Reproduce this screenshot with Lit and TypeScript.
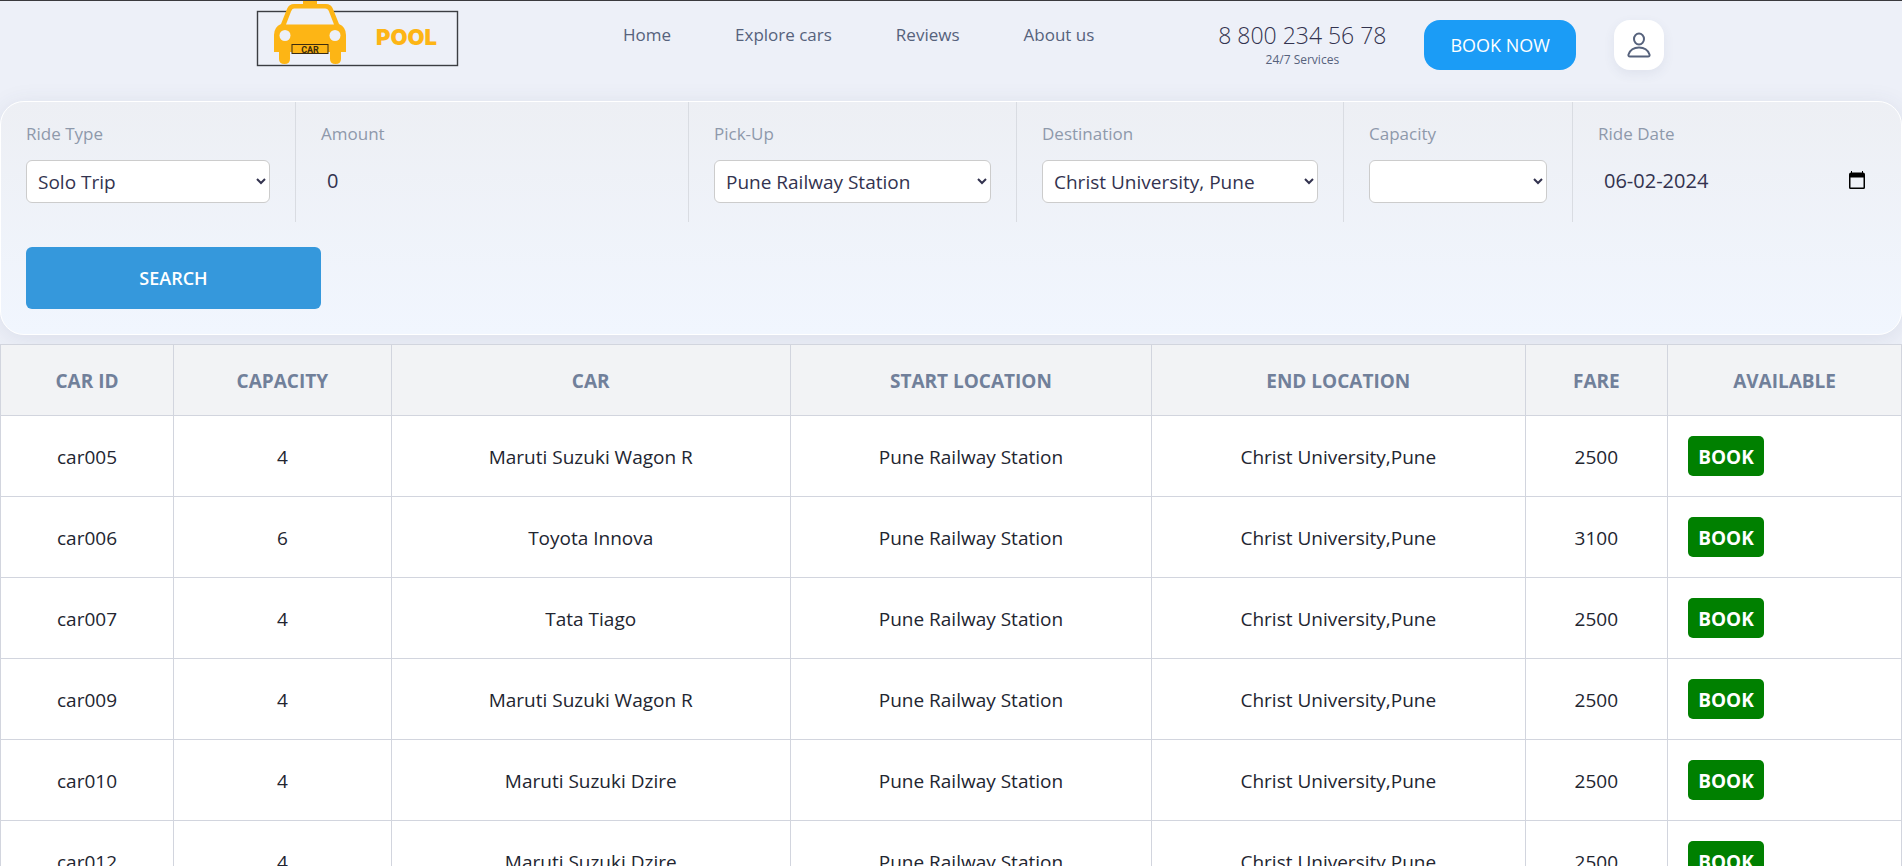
import { LitElement, html, css } from "lit";
import { customElement, property, state } from "lit/decorators.js";

interface Car {
  id: string;
  capacity: number;
  name: string;
  from: string;
  to: string;
  fare: number;
}

const START = "Pune Railway Station";
const END = "Christ University,Pune";

const CARS: Car[] = [
  { id: "car005", capacity: 4, name: "Maruti Suzuki Wagon R", from: START, to: END, fare: 2500 },
  { id: "car006", capacity: 6, name: "Toyota Innova", from: START, to: END, fare: 3100 },
  { id: "car007", capacity: 4, name: "Tata Tiago", from: START, to: END, fare: 2500 },
  { id: "car009", capacity: 4, name: "Maruti Suzuki Wagon R", from: START, to: END, fare: 2500 },
  { id: "car010", capacity: 4, name: "Maruti Suzuki Dzire", from: START, to: END, fare: 2500 },
  { id: "car012", capacity: 4, name: "Maruti Suzuki Dzire", from: START, to: END, fare: 2500 },
];

@customElement("site-header")
export class SiteHeader extends LitElement {
  static styles = css`
    :host {
      display: block;
      border-top: 1px solid #3a3a3e;
    }
    .inner {
      display: flex;
      align-items: flex-start;
      box-sizing: border-box;
      max-width: 1426px;
      height: 100px;
      margin: 0 auto;
      padding-left: 17px;
    }
    .logo {
      display: block;
      flex: none;
      width: 204px;
      height: 66px;
    }
    .logo svg {
      display: block;
    }
    .nav {
      display: flex;
      gap: 64px;
      margin-left: 164px;
      padding-top: 22px;
    }
    .nav a {
      color: #56627c;
      font-size: 17px;
      line-height: 24px;
      font-weight: 500;
      text-decoration: none;
      white-space: nowrap;
    }
    .actions {
      display: flex;
      gap: 38px;
      margin-left: auto;
      padding-top: 19px;
    }
    .contact {
      display: flex;
      flex-direction: column;
      align-items: center;
    }
    .phone {
      color: #33334f;
      font-size: 23px;
      line-height: 30px;
      font-weight: 300;
      text-decoration: none;
      white-space: nowrap;
    }
    .hours {
      color: #56627c;
      font-size: 12px;
      line-height: 20px;
    }
    .book {
      box-sizing: border-box;
      height: 50px;
      padding: 0 26px;
      border-radius: 16px;
      background: #1b9cf6;
      color: #fff;
      font-size: 18px;
      line-height: 50px;
      text-decoration: none;
      white-space: nowrap;
    }
    .user {
      display: grid;
      place-items: center;
      width: 50px;
      height: 50px;
      border-radius: 16px;
      background: #fff;
      box-shadow: 0 4px 12px rgba(60, 72, 110, 0.08);
    }
  `;

  render() {
    return html`
      <header class="inner">
        <a class="logo" href="#home" aria-label="Car Pool">
          <svg width="204" height="66" viewBox="0 0 204 66">
            <rect x="2.5" y="10.5" width="200" height="54" fill="none" stroke="#3b3d42" stroke-width="1.4" />
            <path
              d="M48 0h14v3h9q5 0 7 5l6 15q7 3 7 11v17h-5v7q0 5-5.500 5t-5.500-5v-7H35v7q0 5-5.500 5T24 58v-7h-5V34q0-8 7-11l6-15q2-5 7-5h9z"
              fill="#fdb515"
            />
            <path d="M39 7.500h31q3 0 4 3l5 13H31l5-13q1-3 3-3z" fill="#edf0f8" />
            <circle cx="30" cy="34.500" r="5.500" fill="#edf0f8" />
            <circle cx="80" cy="34.500" r="5.500" fill="#edf0f8" />
            <rect x="37" y="43.500" width="36" height="9" fill="#fdb515" stroke="#3b2c10" />
            <text x="55" y="51.500" text-anchor="middle" font-family="Roboto, sans-serif" font-size="9" font-weight="700" fill="#3b2c10">CAR</text>
            <text x="121" y="44" font-family="Inter, sans-serif" font-size="22" font-weight="900" fill="#fdb515">POOL</text>
          </svg>
        </a>
        <nav class="nav">
          <a href="#home">Home</a>
          <a href="#cars">Explore cars</a>
          <a href="#reviews">Reviews</a>
          <a href="#about">About us</a>
        </nav>
        <div class="actions">
          <div class="contact">
            <a class="phone" href="tel:88002345678">8 800 234 56 78</a>
            <span class="hours">24/7 Services</span>
          </div>
          <a class="book" href="#book">BOOK NOW</a>
          <a class="user" href="#profile" aria-label="Profile">
            <svg width="24" height="26" viewBox="0 0 24 26" fill="none" stroke="#56627c" stroke-width="2">
              <ellipse cx="12" cy="7" rx="5" ry="5.500" />
              <path d="M3 24.500q-2 0-1.500-2Q4 15.500 12 15.500t10.500 7q.5 2-1.500 2z" stroke-linejoin="round" />
            </svg>
          </a>
        </div>
      </header>
    `;
  }
}

@customElement("ride-search")
export class RideSearch extends LitElement {
  @state() private rideDate = "06-02-2024";

  static styles = css`
    :host {
      display: block;
    }
    .panel {
      border: 1px solid #fff;
      border-radius: 24px;
      background: linear-gradient(to top, #f1f6fe, #edeff4);
      box-shadow: 0 4px 24px rgba(60, 72, 110, 0.1);
    }
    .fields {
      display: grid;
      grid-template-columns: 295fr 393fr 328fr 327fr 229fr 328fr;
    }
    .field {
      box-sizing: border-box;
      min-width: 0;
      height: 120px;
      padding: 20px 25px;
      border-right: 1px solid #d9dce2;
    }
    .field:last-child {
      border-right: 0;
    }
    label {
      display: block;
      margin-bottom: 14px;
      color: #8e99ab;
      font-size: 17px;
      line-height: 24px;
    }
    select,
    input {
      box-sizing: border-box;
      display: block;
      width: 100%;
      height: 43px;
      color: #33334f;
      font-family: inherit;
      font-size: 19px;
      font-weight: 400;
    }
    select {
      padding: 0 7px;
      border: 1px solid #ccc;
      border-radius: 6px;
      background: #fff;
    }
    input {
      height: 40px;
      padding: 0 6px;
      border: 0;
      background: none;
      outline: 0;
      font-size: 20px;
    }
    .date {
      display: flex;
      align-items: center;
      padding-right: 11px;
    }
    .date input {
      flex: 1;
      min-width: 0;
    }
    .calendar {
      display: block;
      padding: 0;
      border: 0;
      background: none;
      line-height: 0;
    }
    .actions {
      padding: 25px;
    }
    .search {
      width: 295px;
      height: 62px;
      border: 0;
      border-radius: 6px;
      background: #3598dc;
      color: #fff;
      font-family: inherit;
      font-size: 18px;
      font-weight: 600;
    }
  `;

  render() {
    return html`
      <form class="panel" @submit=${(e: Event) => e.preventDefault()}>
        <div class="fields">
          <div class="field">
            <label for="type">Ride Type</label>
            <select id="type">
              <option>Solo Trip</option>
            </select>
          </div>
          <div class="field">
            <label for="amount">Amount</label>
            <input id="amount" value="0" />
          </div>
          <div class="field">
            <label for="from">Pick-Up</label>
            <select id="from">
              <option>Pune Railway Station</option>
            </select>
          </div>
          <div class="field">
            <label for="to">Destination</label>
            <select id="to">
              <option>Christ University, Pune</option>
            </select>
          </div>
          <div class="field">
            <label for="capacity">Capacity</label>
            <select id="capacity">
              <option></option>
            </select>
          </div>
          <div class="field">
            <label for="date">Ride Date</label>
            <div class="date">
              <input id="date" .value=${this.rideDate} />
              <button class="calendar" type="button" aria-label="Open calendar">
                <svg width="16" height="20" viewBox="0 0 16 20">
                  <path
                    d="M2 1h1v1.500h10V1h1v1.500q2 0 2 2v13q0 1.500-1.500 1.500h-13Q0 19 0 17.500v-13q0-2 2-2zM1.500 7.500v10h13v-10z"
                    fill="#000"
                    fill-rule="evenodd"
                  />
                </svg>
              </button>
            </div>
          </div>
        </div>
        <div class="actions">
          <button class="search" type="submit">SEARCH</button>
        </div>
      </form>
    `;
  }
}

@customElement("car-table")
export class CarTable extends LitElement {
  @property({ attribute: false }) cars: Car[] = [];

  static styles = css`
    :host {
      display: block;
    }
    table {
      width: 100%;
      border-collapse: collapse;
      table-layout: fixed;
      background: #fff;
    }
    .c-id {
      width: 9.1%;
    }
    .c-capacity {
      width: 11.45%;
    }
    .c-car {
      width: 21%;
    }
    .c-from {
      width: 19%;
    }
    .c-to {
      width: 19.65%;
    }
    .c-fare {
      width: 7.5%;
    }
    th,
    td {
      box-sizing: border-box;
      border: 1px solid #d2d5de;
      padding: 2px 20px 0;
      text-align: center;
      font-size: 19px;
      line-height: 26px;
    }
    th {
      height: 71px;
      background: #f2f3f5;
      color: #71809a;
      font-weight: 700;
    }
    td {
      height: 81px;
      color: #222530;
    }
    .available {
      padding-top: 0;
      text-align: left;
    }
    .book {
      display: block;
      height: 40px;
      padding: 2px 10px 0;
      border: 0;
      border-radius: 5px;
      background: #008000;
      color: #fff;
      font-family: inherit;
      font-size: 19px;
      font-weight: 700;
    }
  `;

  render() {
    return html`
      <table>
        <colgroup>
          <col class="c-id" />
          <col class="c-capacity" />
          <col class="c-car" />
          <col class="c-from" />
          <col class="c-to" />
          <col class="c-fare" />
          <col />
        </colgroup>
        <thead>
          <tr>
            <th>CAR ID</th>
            <th>CAPACITY</th>
            <th>CAR</th>
            <th>START LOCATION</th>
            <th>END LOCATION</th>
            <th>FARE</th>
            <th>AVAILABLE</th>
          </tr>
        </thead>
        <tbody>
          ${this.cars.map(
            (car) => html`
              <tr>
                <td>${car.id}</td>
                <td>${car.capacity}</td>
                <td>${car.name}</td>
                <td>${car.from}</td>
                <td>${car.to}</td>
                <td>${car.fare}</td>
                <td class="available"><button class="book" type="button">BOOK</button></td>
              </tr>
            `
          )}
        </tbody>
      </table>
    `;
  }
}

@customElement("app-root")
export class AppRoot extends LitElement {
  static styles = css`
    :host {
      display: block;
      background: #edf0f8;
      font-family: "Open Sans", "Noto Sans", sans-serif;
    }
    .results {
      display: block;
      position: relative;
      margin-top: 9px;
    }
  `;

  render() {
    return html`
      <site-header></site-header>
      <main>
        <ride-search></ride-search>
        <car-table class="results" .cars=${CARS}></car-table>
      </main>
    `;
  }
}
